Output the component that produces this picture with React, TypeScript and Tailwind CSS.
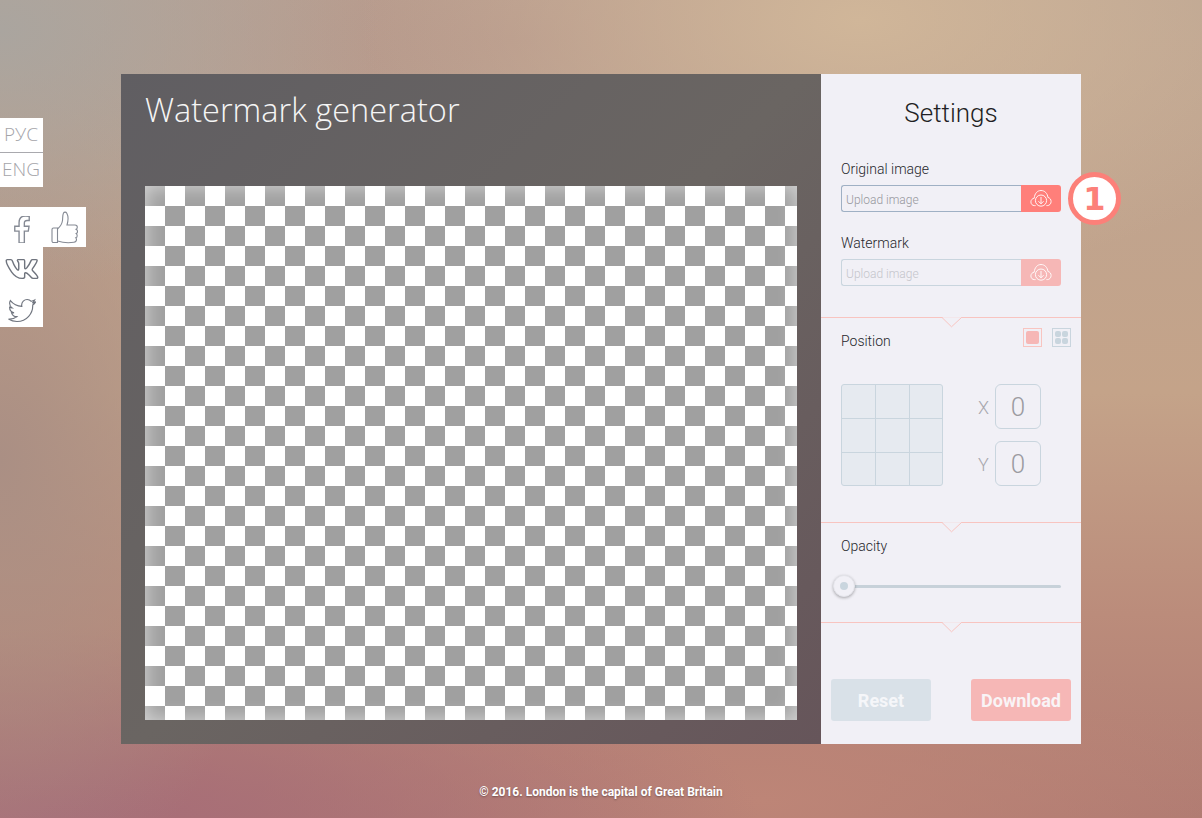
import { FaFacebookF, FaTwitter, FaVk } from "react-icons/fa";

const CloudIcon = () => (
  <svg viewBox="0 0 22 17" className="h-[17px] w-[22px]" fill="none" stroke="#fff" strokeWidth="0.900">
    <path d="M5.600 15.600H4.400C2.300 15.600 0.900 14 0.900 11.900C0.900 9.900 2.400 8.400 4.200 8.200C4.600 3.600 7.300 0.500 11 0.500C14.800 0.500 17.600 3.600 17.900 7.400C19.800 7.800 21.100 9.500 21.100 11.500C21.100 13.800 19.500 15.600 17.300 15.600H16.400" />
    <circle cx="11" cy="10.600" r="5.600" />
    <path d="M11 7V13.800M8.400 11.200L11 13.800L13.600 11.200" />
  </svg>
);

const ThumbIcon = () => (
  <svg viewBox="0 0 27 34" className="h-[34px] w-[27px]" fill="none" stroke="#858a94" strokeWidth="1.1">
    <path d="M1 18.500C1 17.500 1.600 17 2.500 17H6.500V31.500H2.500C1.600 31.500 1 31 1 30Z" />
    <path d="M6.500 18C9.500 15.500 11 13 11.500 9.500C11.800 7 11.500 4 12.500 2C13.200 0.800 15 0.800 15.800 2.200C17.200 4.700 17.200 10 16 14H24C25.500 14 26.300 15 26.300 16.200C26.300 17.200 25.800 17.800 25.100 18.200C26.200 18.600 26.500 19.500 26.500 20.500C26.500 21.500 26 22.300 25.200 22.600C25.900 23.100 26.200 23.800 26.200 24.700C26.200 25.700 25.700 26.500 24.800 26.800C25.300 27.300 25.500 27.900 25.500 28.500C25.500 30 24.400 31.100 22.900 31.300C18.500 32 12.500 32 6.500 30" />
  </svg>
);

const UploadRow = ({ dim }: { dim?: boolean }) => (
  <div className="flex h-[27px] w-[220px]">
    <div
      className={
        dim
          ? "flex flex-1 items-center rounded-l-[3px] border border-r-0 border-[#c9d5de] pt-[2px] pl-1 text-xs font-light text-[#c4c5cb]"
          : "flex flex-1 items-center rounded-l-[3px] border border-r-0 border-[#9fb0c4] pt-[2px] pl-1 text-xs font-light text-[#96979d]"
      }
    >
      Upload image
    </div>
    <div className={dim ? "flex w-10 items-center justify-center rounded-r-[3px] bg-[#f6b7b6]" : "flex w-10 items-center justify-center rounded-r-[3px] bg-[#ff7f7a]"}>
      <CloudIcon />
    </div>
  </div>
);

const Notch = () => (
  <svg viewBox="0 0 20 11" className="absolute left-[121px] top-[-1px] h-[11px] w-[20px]">
    <path d="M0 0.500L9.500 9.800L19.500 0.500" fill="#f1f0f6" stroke="#f8c4c0" strokeWidth="1" />
    <path d="M1 0H19V0.600H1Z" fill="#f1f0f6" />
  </svg>
);

const CoordField = ({ label }: { label: string }) => (
  <div className="flex items-center">
    <span className="w-[17px] pt-[2px] text-lg font-light text-[#a7a7ad]">{label}</span>
    <div className="flex h-[45px] w-[46px] items-center justify-center rounded-md border border-[#c9d5de] pt-[2px] text-[26px] font-light text-[#9b9ba1]">
      0
    </div>
  </div>
);

export default function App() {
  const cells = Array.from({ length: 9 });

  return (
    <div className="relative h-[818px] overflow-hidden bg-[radial-gradient(ellipse_380px_260px_at_0px_30px,#aaa59f_0%,rgba(170,165,159,0)_100%),radial-gradient(ellipse_500px_260px_at_860px_20px,#d0b699_0%,rgba(208,182,153,0)_100%),radial-gradient(ellipse_520px_200px_at_520px_40px,#b5978b_0%,rgba(181,151,139,0)_100%),radial-gradient(ellipse_280px_460px_at_0px_460px,#aa8f84_0%,rgba(170,143,132,0)_100%),radial-gradient(ellipse_700px_190px_at_60px_818px,#a66c78_0%,rgba(166,108,120,0)_100%),radial-gradient(ellipse_500px_180px_at_760px_800px,#bd8577_0%,rgba(189,133,119,0)_100%),linear-gradient(180deg,#bda593_0%,#c4a389_48%,#bb8c7b_75%,#b07b72_100%)] font-['Roboto']">
      {/* language + share strip */}
      <div className="absolute left-0 top-[118px] w-[43px] bg-white font-['Open_Sans'] text-[19px] font-light text-[#a4a4a9]">
        <div className="flex h-[34px] items-center justify-end pr-[5px] pb-[2px]">РУС</div>
        <div className="h-px bg-[#a9a9ae]" />
        <div className="flex h-[34px] items-center justify-end pr-[3px] pb-[2px]">ENG</div>
      </div>
      <div className="absolute left-0 top-[207px] w-[43px] bg-white">
        <div className="flex h-10 items-center justify-center pt-1">
          <FaFacebookF className="h-[27px] w-[18px]" fill="#fff" stroke="#858a94" strokeWidth="26" />
        </div>
        <div className="flex h-10 items-center justify-center pt-1">
          <FaVk className="h-[30px] w-[34px]" fill="#fff" stroke="#6f747e" strokeWidth="24" />
        </div>
        <div className="flex h-10 items-center justify-center pt-[6px]">
          <FaTwitter className="h-[27px] w-[28px]" fill="#fff" stroke="#6f747e" strokeWidth="22" />
        </div>
        <div className="absolute left-[43px] top-0 flex h-10 w-[43px] items-center justify-center bg-white pt-[2px]">
          <ThumbIcon />
        </div>
      </div>

      <div className="mx-auto flex w-[960px] pt-[74px]">
        <div className="flex h-[670px] w-[700px] flex-col bg-[linear-gradient(135deg,#605e62_0%,#6a6562_50%,#66555a_100%)] px-6">
          <h1 className="h-28 pt-[12px] font-['Open_Sans'] text-[32.500px] leading-[48px] font-light text-[#f5f5f5]">Watermark generator</h1>
          <div className="h-[534px] w-[652px] bg-[repeating-conic-gradient(from_270deg,#a0a0a0_0_25%,#fff_0_50%)] bg-size-[40px_40px] shadow-[inset_0_0_20px_rgba(255,255,255,0.6)]" />
        </div>

        <div className="relative flex w-[260px] flex-col bg-[#f1f0f6] text-sm font-light text-[#26262b]">
          <section className="h-[243px] px-5">
            <h2 className="pt-[21px] text-center text-[26px] leading-9 font-light text-[#1f1f24]">Settings</h2>
            <p className="mt-[28px] h-[26px] leading-5">Original image</p>
            <UploadRow />
            <p className="mt-[21px] h-[26px] leading-5">Watermark</p>
            <UploadRow dim />
          </section>

          {/* step badge */}
          <div className="absolute left-[247px] top-[98px] flex h-[53px] w-[53px] items-center justify-center rounded-full border-[5px] border-[#fc8079] bg-white font-['DejaVu_Sans'] text-[32px] leading-none font-bold text-[#fc8079]">
            1
          </div>

          <section className="relative h-[205px] border-t border-[#f8c4c0] px-5">
            <Notch />
            <div className="flex items-start justify-between pt-[10px]">
              <p className="pt-[3px] leading-5">Position</p>
              <div className="mr-[-10px] flex gap-[10px]">
                <div className="h-[19px] w-[19px] border border-[#f8c4c0] p-[2px]">
                  <div className="h-full w-full rounded-[2px] bg-[#f6b7b6]" />
                </div>
                <div className="grid h-[19px] w-[19px] grid-cols-2 gap-px border border-[#c9d5de] p-[2px]">
                  <div className="rounded-[2px] bg-[#c9d5de]" />
                  <div className="rounded-[2px] bg-[#c9d5de]" />
                  <div className="rounded-[2px] bg-[#c9d5de]" />
                  <div className="rounded-[2px] bg-[#c9d5de]" />
                </div>
              </div>
            </div>
            <div className="mt-[33px] flex">
              <div className="grid h-[102px] w-[102px] grid-cols-[34px_34px_1fr] grid-rows-[34px_34px_1fr] overflow-hidden rounded-[3px] border border-[#c9d5de] bg-[#e6eaf0]">
                {cells.map((_, i) => (
                  <div
                    key={i}
                    className={
                      (i % 3 < 2 ? "border-r " : "") + (i < 6 ? "border-b " : "") + "border-[#c9d5de]"
                    }
                  />
                ))}
              </div>
              <div className="ml-[35px] flex flex-col gap-3">
                <CoordField label="X" />
                <CoordField label="Y" />
              </div>
            </div>
          </section>

          <section className="relative h-[100px] border-t border-[#f8c4c0] px-5">
            <Notch />
            <p className="pt-[13px] leading-5">Opacity</p>
            <div className="relative mt-[29px] ml-1 h-[3px] rounded-full bg-[#c7d1d9]">
              <div className="absolute left-[-12px] top-[-10px] flex h-[22px] w-[22px] items-center justify-center rounded-full border border-[#e4e4ea] bg-[#f1f0f6] shadow-[0_1px_3px_rgba(0,0,0,0.3)]">
                <div className="h-2 w-2 rounded-full bg-[#c9d5de]" />
              </div>
            </div>
          </section>

          <section className="relative flex flex-1 items-start justify-between border-t border-[#f8c4c0] px-[10px] pt-[56px]">
            <Notch />
            <button className="h-[42px] w-[100px] rounded-[3px] bg-[#d9e1e8] pt-px text-lg font-bold text-[#f5f6f9]">Reset</button>
            <button className="h-[42px] w-[100px] rounded-[3px] bg-[#f6b7b6] pt-px text-lg font-bold text-[#f9f4f6]">Download</button>
          </section>
        </div>
      </div>

      <footer className="mt-10 text-center text-xs font-bold text-white [text-shadow:0_1px_2px_rgba(0,0,0,0.35)]">
        © 2016. London is the capital of Great Britain
      </footer>
    </div>
  );
}
